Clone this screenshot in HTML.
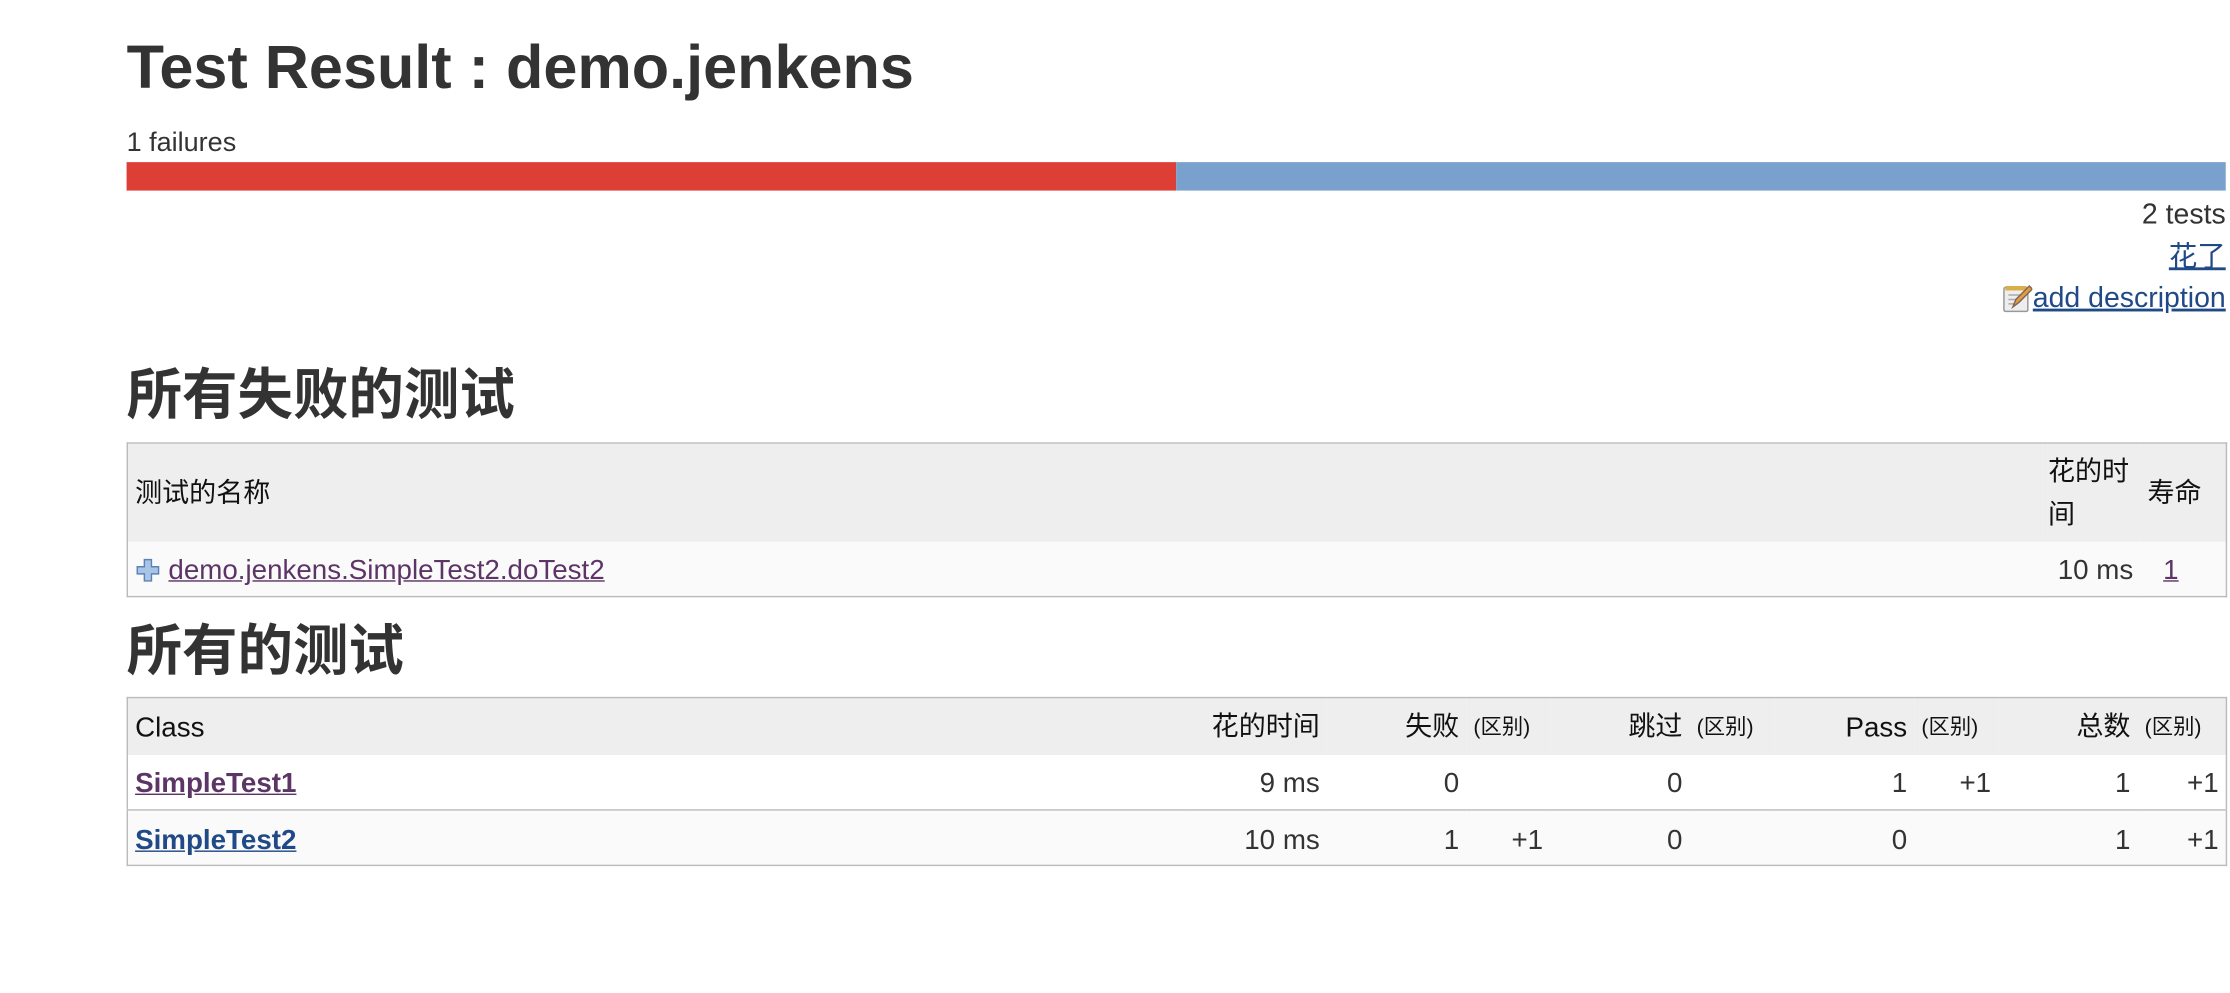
<!DOCTYPE html>
<html><head><meta charset="utf-8"><style>
html,body{margin:0;padding:0;background:#fff;width:2230px;height:992px;overflow:hidden}
#w{position:absolute;left:0;top:0;width:1568px;height:698px;transform:scale(1.42219);transform-origin:0 0;font-family:"Liberation Sans","Noto Sans CJK SC",sans-serif;color:#333;font-size:20px}
.a{position:absolute;white-space:nowrap}
a{color:#204a87;text-decoration:underline}
a.v{color:#5c3566}
.r{text-align:right}
table{position:absolute;border-collapse:collapse;border:1px solid #bbb}
td{padding:3px 5px 0 5px;font-size:19.5px;color:#333;vertical-align:middle;line-height:24px;white-space:nowrap}
.h td{background:#eee;color:#111}
</style></head><body><div id="w">
<div class="a" style="left:89px;top:23px;font-size:43px;font-weight:bold;line-height:50px">Test Result : demo.jenkens</div>
<div class="a" style="left:89px;top:89px;line-height:24px;font-size:19px">1 failures</div>
<div class="a" style="left:89px;top:114px;width:738px;height:20px;background:#dd3e35"></div>
<div class="a" style="left:827px;top:114px;width:738px;height:20px;background:#7aa0cd"></div>
<div class="a r" style="right:3px;top:139px;line-height:24px">2 tests</div>
<div class="a r" style="right:3px;top:169px;line-height:24px"><a href="#">花了</a></div>
<div class="a r" style="right:3px;top:198px;line-height:24px"><svg width="21" height="21" viewBox="0 0 20 20" style="vertical-align:-4px"><rect x="1" y="3" width="16" height="16" rx="1" fill="#eee" stroke="#999"/><rect x="2" y="2" width="14" height="3" fill="#d8b04a"/><path d="M4 8h10M4 11h8M4 14h6" stroke="#aaa"/><path d="M7 16l2-5 9-9 2 2-9 9z" fill="#e0a040" stroke="#865"/></svg><a href="#">add description</a></div>
<div class="a" style="left:89px;top:256px;font-size:39px;font-weight:bold;line-height:46px">所有失败的测试</div>
<table style="left:89px;top:311px;width:1477px">
<tr class="h" style="height:69px"><td style="font-size:19px">测试的名称</td><td style="width:60px;line-height:30px;padding-left:4px;white-space:normal;font-size:19px">花的时间</td><td style="width:50px;font-size:19px">寿命</td></tr>
<tr style="height:39px;background:#fafafa"><td><svg width="18" height="18" viewBox="0 0 18 18" style="vertical-align:-3px"><path d="M6.5 1.5h5v5h5v5h-5v5h-5v-5h-5v-5h5z" fill="#a9c4e4" stroke="#5a82b8"/></svg> <a class="v" href="#">demo.jenkens.SimpleTest2.doTest2</a></td><td class="r">10 ms</td><td style="padding-left:16px"><a class="v" href="#">1</a></td></tr>
</table>
<div class="a" style="left:89px;top:436px;font-size:39px;font-weight:bold;line-height:46px">所有的测试</div>
<table style="left:89px;top:490px;width:1477px">
<tr class="h" style="height:40px"><td>Class</td><td class="r" style="width:88px;font-size:19px">花的时间</td><td class="r" style="width:88px;font-size:19px">失败</td><td style="width:49px;font-size:15px">(区别)</td><td class="r" style="width:88px;font-size:19px">跳过</td><td style="width:50px;font-size:15px">(区别)</td><td class="r" style="width:88px">Pass</td><td style="width:49px;font-size:15px">(区别)</td><td class="r" style="width:88px;font-size:19px">总数</td><td style="width:52px;font-size:15px">(区别)</td></tr>
<tr style="height:39px;background:#fff;border-bottom:1px solid #bbb"><td><a class="v" href="#" style="font-weight:bold">SimpleTest1</a></td><td class="r">9 ms</td><td class="r">0</td><td class="r"></td><td class="r">0</td><td class="r"></td><td class="r">1</td><td class="r">+1</td><td class="r">1</td><td class="r">+1</td></tr>
<tr style="height:39px;background:#fafafa"><td><a href="#" style="font-weight:bold">SimpleTest2</a></td><td class="r">10 ms</td><td class="r">1</td><td class="r">+1</td><td class="r">0</td><td class="r"></td><td class="r">0</td><td class="r"></td><td class="r">1</td><td class="r">+1</td></tr>
</table>
</div></body></html>
